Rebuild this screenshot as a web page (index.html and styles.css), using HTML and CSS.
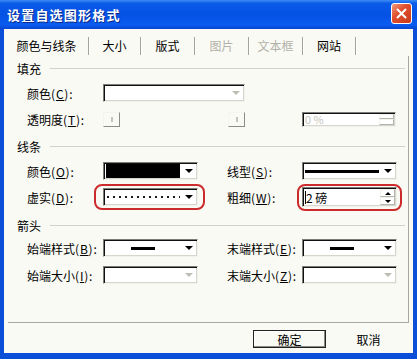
FILE: index.html
```html
<!DOCTYPE html>
<html lang="zh-CN">
<head>
  <meta charset="UTF-8" />
  <title>设置自选图形格式</title>
  <link rel="stylesheet" href="styles.css">
</head>
<body>
  <div class="window">
    <div class="titlebar">
      <span class="title">设置自选图形格式</span>
      <span class="close">
        <svg width="11" height="11" viewBox="0 0 11 11"><path d="M1.5 1.5l8 8M9.5 1.5l-8 8" stroke="#fff" stroke-width="2" stroke-linecap="round"/></svg>
      </span>
    </div>

    <div class="body">
      <div class="tabs">
        <span class="tab first">颜色与线条</span>
        <span class="tab t52">大小</span>
        <span class="tab">版式</span>
        <span class="tab off">图片</span>
        <span class="tab off">文本框</span>
        <span class="tab t53">网站</span>
      </div>

      <div class="panel">
        <div class="head h-fill"><span>填充</span><i></i></div>
        <div class="row r26">
          <span class="lbl">颜色<span class="key">(<u>C</u>):</span></span>
          <div class="combo wide"><div class="val"></div><div class="drop off"></div></div>
        </div>
        <div class="row r26">
          <span class="lbl">透明度<span class="key">(<u>T</u>):</span></span>
          <div class="slider"><span class="knob"></span><span class="knob"></span></div>
          <div class="pct"><div class="val">0 %</div><div class="arrows"><span></span><span></span></div></div>
        </div>

        <div class="head h-line"><span>线条</span><i></i></div>
        <div class="row r22">
          <span class="lbl">颜色<span class="key">(<u>O</u>):</span></span>
          <div class="combo"><div class="val"><b class="fill"></b></div><div class="drop"></div></div>
          <span class="lbl lbl2">线型<span class="key">(<u>S</u>):</span></span>
          <div class="combo"><div class="val"><b class="thick"></b></div><div class="drop"></div></div>
        </div>
        <div class="row r30">
          <span class="lbl">虚实<span class="key">(<u>D</u>):</span></span>
          <div class="combo mark"><div class="val"><b class="dots"></b></div><div class="drop"></div></div>
          <span class="lbl lbl2">粗细<span class="key">(<u>W</u>):</span></span>
          <div class="spin mark mark2">
            <div class="val"><span class="caret">2 磅</span></div>
            <div class="arrows on"><span class="up"></span><span class="down"></span></div>
          </div>
        </div>

        <div class="head h-arrow"><span>箭头</span><i></i></div>
        <div class="row r18">
          <span class="lbl">始端样式<span class="key">(<u>B</u>):</span></span>
          <div class="combo"><div class="val center"><b class="short"></b></div><div class="drop"></div></div>
          <span class="lbl lbl2">末端样式<span class="key">(<u>E</u>):</span></span>
          <div class="combo"><div class="val center"><b class="short"></b></div><div class="drop"></div></div>
        </div>
        <div class="row r36">
          <span class="lbl">始端大小<span class="key">(<u>I</u>):</span></span>
          <div class="combo"><div class="val"></div><div class="drop off"></div></div>
          <span class="lbl lbl2">末端大小<span class="key">(<u>Z</u>):</span></span>
          <div class="combo"><div class="val"></div><div class="drop off"></div></div>
        </div>
      </div>

      <div class="footer">
        <span class="btn default">确定</span>
        <span class="btn">取消</span>
      </div>
    </div>
  </div>
</body>
</html>
```

FILE: styles.css
```css
* {
  margin: 0;
  padding: 0;
  box-sizing: border-box;
}

body {
  background: #fff;
  font-family: "Noto Sans CJK SC", "Noto Sans", sans-serif;
  font-size: 12px;
  color: #000;
}

u {
  text-decoration: underline;
  text-underline-offset: 1px;
}

.window {
  width: 417px;
  height: 359px;
  display: flex;
  flex-direction: column;
  background: #0b4fd9;
}

/* title bar */
.titlebar {
  height: 29px;
  display: flex;
  align-items: center;
  justify-content: space-between;
  padding: 0 5px 0 7px;
  background: linear-gradient(#3c8cf6 0%, #0a5ae8 12%, #0552e4 50%, #0a5cf0 85%, #0846d0 100%);
}

.title {
  color: #fff;
  font-weight: bold;
  font-size: 13px;
  letter-spacing: 1.2px;
  text-shadow: 1px 1px 0 #0a2a8a;
}

.close {
  width: 21px;
  height: 21px;
  margin-bottom: 2px;
  border: 1px solid #fff;
  border-radius: 3px;
  background: linear-gradient(135deg, #f39b7c 0%, #e0502e 40%, #c7391a 100%);
  display: flex;
  align-items: center;
  justify-content: center;
}

/* dialog body */
.body {
  flex: 1;
  margin: 0 4px 6px 4px;
  background: #fafaf4;
  display: flex;
  flex-direction: column;
}

.tabs {
  height: 27px;
  display: flex;
  align-items: flex-end;
  padding-left: 1px;
}

.tab {
  width: 54px;
  height: 18px;
  line-height: 18px;
  margin-bottom: 1px;
  text-align: center;
  border-right: 1px solid #a3a39c;
  box-shadow: 1px 0 0 #ffffff;
}

.tab.first { width: 84px; }
.tab.t52 { width: 52px; }
.tab.t53 { width: 53px; }
.tab.off { color: #b2b2aa; }

.panel {
  flex: 1;
  margin: 0 4px;
  padding-left: 9px;
  border-right: 1px solid #a9a9a2;
  border-bottom: 1px solid #a9a9a2;
  display: flex;
  flex-direction: column;
}

.head {
  display: flex;
  align-items: center;
}

.head i {
  flex: 1;
  height: 1px;
  background: #d2d2ca;
  margin: 0 3px 0 9px;
}

.h-fill { height: 24px; }
.h-line { height: 28px; }
.h-arrow { height: 27px; }

.row {
  display: flex;
  align-items: center;
  padding-left: 10px;
}

.r18 { height: 18px; }
.r22 { height: 22px; }
.r26 { height: 26px; }
.r30 { height: 30px; }
.r36 { height: 36px; }

.lbl {
  width: 76px;
  white-space: nowrap;
}

.key { letter-spacing: 0.8px; }

.lbl2 {
  width: 75px;
  margin-left: 29px;
}

/* combo boxes */
.combo, .spin, .pct {
  width: 95px;
  height: 18px;
  display: flex;
  background: #fff;
  border: 1px solid;
  border-color: #7c7c78 #f2f2ec #f2f2ec #7c7c78;
  box-shadow: inset 1px 1px 0 #111, inset -1px -1px 0 #d6d6ce;
}

.combo.wide { width: 142px; }

.val {
  flex: 1;
  display: flex;
  align-items: center;
  padding: 0 1px 0 2px;
}

.val.center { justify-content: center; }

.drop {
  width: 16px;
  display: flex;
  align-items: center;
  justify-content: center;
}

.drop::after {
  content: "";
  border: 4px solid transparent;
  border-bottom: 0;
  border-top-color: #000;
}

.drop.off::after { border-top-color: #bdbdb4; }

.fill {
  flex: 1;
  height: 14px;
  background: #000;
}

.thick {
  flex: 1;
  height: 3px;
  background: #000;
}

.dots {
  flex: 1;
  height: 2px;
  margin-left: 1px;
  background: repeating-linear-gradient(90deg, #1a1a1a 0 2px, transparent 2px 6px);
}

.short {
  width: 24px;
  height: 3px;
  background: #000;
}

/* spin boxes */
.spin { height: 20px; }

.caret {
  border-left: 1px solid #000;
  line-height: 13px;
}

.arrows {
  width: 16px;
  display: flex;
  flex-direction: column;
  padding: 1px 1px 1px 0;
}

.arrows span {
  flex: 1;
  border: 1px solid;
  border-color: #f4f4ee #b4b4ac #b4b4ac #f4f4ee;
  display: flex;
  align-items: center;
  justify-content: center;
}

.arrows .up::after {
  content: "";
  border: 3px solid transparent;
  border-top: 0;
  border-bottom-color: #000;
}

.arrows .down::after {
  content: "";
  border: 3px solid transparent;
  border-bottom: 0;
  border-top-color: #000;
}

.pct {
  width: 94px;
  height: 15px;
  margin-left: 57px;
  color: #c4c4bc;
}

.pct .val { font-size: 11px; }

/* disabled slider */
.slider {
  width: 142px;
  display: flex;
  justify-content: space-between;
}

.knob {
  width: 17px;
  height: 15px;
  border: 1px solid;
  border-color: #f4f4f0 #8c8c88 #8c8c88 #f4f4f0;
  display: flex;
  align-items: center;
  justify-content: center;
}

.knob::after {
  content: "";
  width: 2px;
  height: 5px;
  background: #c4c4bc;
}

/* red annotation rings */
.mark { position: relative; }

.mark::before {
  content: "";
  position: absolute;
  inset: -5px -8px -5px -10px;
  border: 2px solid #cc2b2b;
  border-radius: 8px;
}

.mark2::before { inset: -4px -6px -5px -6px; }

/* buttons */
.footer {
  height: 30px;
  display: flex;
  justify-content: flex-end;
  align-items: flex-start;
  gap: 6px;
  padding: 7px 8px 0 0;
}

.btn {
  width: 73px;
  height: 18px;
  display: flex;
  align-items: center;
  justify-content: center;
}

.btn.default {
  border: 1px solid #222;
  box-shadow: inset -1px -1px 0 #8a8a86, inset 1px 1px 0 #fff;
}
```
